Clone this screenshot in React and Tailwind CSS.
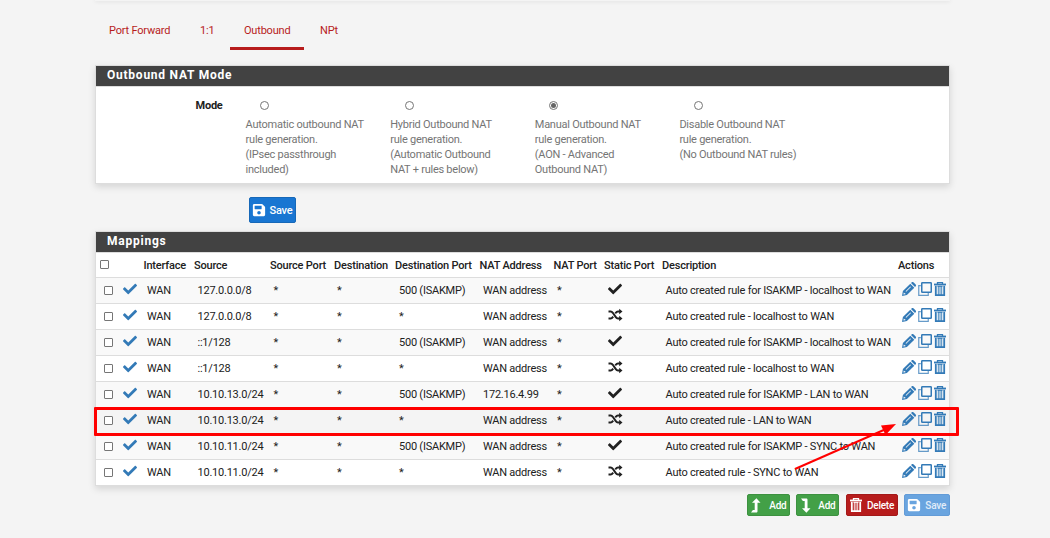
import React from "react";
import { FaCheck, FaSave } from "react-icons/fa";

const modes = [
  ["Automatic outbound NAT", "rule generation.", "(IPsec passthrough", "included)"],
  ["Hybrid Outbound NAT", "rule generation.", "(Automatic Outbound", "NAT + rules below)"],
  ["Manual Outbound NAT", "rule generation.", "(AON - Advanced", "Outbound NAT)"],
  ["Disable Outbound NAT", "rule generation.", "(No Outbound NAT rules)"],
];

const rules = [
  ["127.0.0.0/8", true, "WAN address", "Auto created rule for ISAKMP - localhost to WAN"],
  ["127.0.0.0/8", false, "WAN address", "Auto created rule - localhost to WAN"],
  ["::1/128", true, "WAN address", "Auto created rule for ISAKMP - localhost to WAN"],
  ["::1/128", false, "WAN address", "Auto created rule - localhost to WAN"],
  ["10.10.13.0/24", true, "172.16.4.99", "Auto created rule for ISAKMP - LAN to WAN"],
  ["10.10.13.0/24", false, "WAN address", "Auto created rule - LAN to WAN"],
  ["10.10.11.0/24", true, "WAN address", "Auto created rule for ISAKMP - SYNC to WAN"],
  ["10.10.11.0/24", false, "WAN address", "Auto created rule - SYNC to WAN"],
];

const columns = "grid grid-cols-[24px_24px_50px_76px_64px_61px_84.5px_74px_50.5px_58px_236px_51px]";

function Shuffle() {
  return (
    <svg width="15" height="14" viewBox="0 0 15 14" className="-ml-[0.5px] block" fill="none" stroke="currentColor" strokeWidth="2">
      <path d="M0.5 3.5h2.2c1 0 1.5.5 2.1 1.3l3 4.3c.6.9 1.2 1.4 2.2 1.4h2M.5 10.5h2.2c1 0 1.5-.5 2.1-1.3l.4-.5M7.2 5.3l.6-.5c.6-.9 1.2-1.3 2.2-1.3h2" />
      <path d="M11.2.8l3.3 2.7-3.3 2.7zM11.2 7.8l3.3 2.7-3.3 2.7z" fill="currentColor" stroke="none" />
    </svg>
  );
}

function Pencil() {
  return (
    <svg width="14" height="14" viewBox="0 0 14 14" fill="currentColor">
      <path fillRule="evenodd" d="M0 14l.9-4.9 7.4-7.4 4 4-7.4 7.4zM1.8 10.6l-.4 2 2-.4-.1-.9-.7-.1zM3.6 9.2l.6.6 4.8-4.8-.6-.6z" />
      <path d="M9 1l.8-.7c.5-.4 1.1-.4 1.6 0L13.7 2.6c.4.5.4 1.1 0 1.6L13 5z" />
    </svg>
  );
}

function Clone() {
  return (
    <svg width="14" height="14" viewBox="0 0 14 14" fill="none" stroke="currentColor">
      <rect x="3.75" y=".75" width="9.5" height="9.5" rx=".6" strokeWidth="1.5" />
      <path d="M2.8 3.6H.75v9.7h9.5v-2.3" strokeWidth="1.2" opacity=".75" />
    </svg>
  );
}

function Trash() {
  return (
    <svg width="12" height="14" viewBox="0 0 12 14" fill="none" stroke="currentColor">
      <path d="M0 2.5h12" strokeWidth="1.8" />
      <path d="M3.5 2V.7h5V2" strokeWidth="1.3" />
      <path d="M1.8 3.8v9.3h8.4V3.8" strokeWidth="1.8" />
      <path d="M3.500 4.300h5" strokeWidth="1" />
      <path d="M4.300 4v9M6 4v9M7.700 4v9" strokeWidth=".9" />
    </svg>
  );
}

function Level({ down }) {
  return (
    <svg width="10" height="15" viewBox="0 0 10 15" className="shrink-0" fill="currentColor">
      {down ? (
        <path d="M0 .5h5.2c.8 0 1.3.5 1.3 1.3v8.4h3L5.4 14.8 1 10.2h2.7V3.1H1.9z" />
      ) : (
        <path d="M0 14.5h5.2c.8 0 1.3-.5 1.3-1.3V4.8h3L5.4.2 1 4.8h2.7v7.1H1.9z" />
      )}
    </svg>
  );
}

function Box({ className = "" }) {
  return (
    <span className={`flex items-center ${className}`}>
      <span className="block h-[9px] w-[9px] rounded-[1px] border border-[#767676] bg-white" />
    </span>
  );
}

function Heading({ children }) {
  return (
    <div className="h-[21px] border-b border-[#dddddd] bg-[#424242] pl-[11px] text-[12px] leading-[18px] font-bold tracking-[0.76px] text-white">
      {children}
    </div>
  );
}

function Button({ children, className = "" }) {
  return (
    <button className={`flex items-center rounded-[2px] border font-medium text-white ${className}`}>{children}</button>
  );
}

export default function App() {
  return (
    <div className="relative h-[538px] w-[1050px] overflow-hidden bg-[#f4f4f4] font-['Roboto',sans-serif] text-[11px] tracking-[-0.23px] text-[#212121]">
      <div className="ml-[95px] w-[855px]">
        <div className="h-px shadow-[0_0_4px_rgba(0,0,0,0.22)]" />
        <nav className="flex h-[49px] tracking-[-0.2px] text-[#b71c1c]">
          <a className="w-[90px] pt-[22px] pl-[14px]">Port Forward</a>
          <a className="w-[45px] pt-[22px] pl-[15px]">1:1</a>
          <a className="w-[74px] border-b-[3px] border-[#b71c1c] pt-[22px] pl-[14px]">Outbound</a>
          <a className="pt-[22px] pl-[16px]">NPt</a>
        </nav>

        <section className="mt-[15px] h-[119px] border border-[#dddddd] bg-white shadow-[0_3px_7px_rgba(0,0,0,0.13)]">
          <Heading>Outbound NAT Mode</Heading>
          <div className="flex pt-[10px]">
            <div className="w-[149.6px] pr-[23px] text-right leading-[18px] font-bold">Mode</div>
            <div className="grid grid-cols-[144.6px_144.6px_144.6px_150px] text-[#757575]">
              {modes.map((lines, i) => (
                <label key={lines[0]} className="block leading-[15px] tracking-[-0.25px] whitespace-nowrap">
                  <span className="mt-[4px] mb-[7px] ml-[14.4px] flex h-[9px] w-[9px] items-center justify-center rounded-full border border-[#767676] bg-white">
                    {i === 2 && <span className="block h-[5px] w-[5px] rounded-full bg-[#666666]" />}
                  </span>
                  {lines.map((line) => <span key={line} className="block">{line}</span>)}
                </label>
              ))}
            </div>
          </div>
        </section>

        <Button className="mt-[13px] ml-[154px] h-[26px] w-[47px] gap-[3.5px] border-[#1768b8] bg-[#1976d2] pl-[2px] text-[11px]">
          <FaSave size={14} /><span className="pt-[2px]">Save</span>
        </Button>

        <section className="mt-[8px] border border-[#dddddd] bg-white shadow-[0_3px_7px_rgba(0,0,0,0.13)]">
          <Heading>Mappings</Heading>
          <div className={`${columns} h-[24px] items-center pt-[2px] font-medium tracking-[-0.19px] whitespace-nowrap`}>
            <Box className="mb-[3px] pl-[4px]" />
            <span />
            <span className="-ml-[0.5px]">Interface</span><span>Source</span><span>Source Port</span><span>Destination</span>
            <span>Destination Port</span><span>NAT Address</span><span>NAT Port</span><span>Static Port</span>
            <span>Description</span><span>Actions</span>
          </div>
          {rules.map(([source, fixed, address, description], i) => (
            <div
              key={i}
              className={`${columns} h-[26px] items-center border-t border-[#dddddd] pt-[2px] whitespace-nowrap ${i === 5 ? "bg-[#f4f4f4]" : i % 2 === 0 ? "bg-[#f9f9f9]" : "bg-white"}`}
            >
              <Box className="mb-[2px] pl-[8px]" />
              <FaCheck size={14} className="mb-[5px] ml-[3px] text-[#337ab7]" />
              <span className="pl-[3px]">WAN</span>
              <span className="pl-[3.5px]">{source}</span>
              <span className="pl-[3.5px]">*</span>
              <span className="pl-[3px]">*</span>
              <span className="pl-[4px]">{fixed ? "500 (ISAKMP)" : "*"}</span>
              <span className="pl-[3.5px]">{address}</span>
              <span className="pl-[3.5px]">*</span>
              <span className="mb-[5px] pl-[4px]">{fixed ? <FaCheck size={14} /> : <Shuffle />}</span>
              <span className="pl-[3.5px]">{description}</span>
              <span className="mb-[5px] flex gap-[2px] pl-[4px] text-[#337ab7]">
                <Pencil /><Clone /><Trash />
              </span>
            </div>
          ))}
        </section>

        <div className="mt-[8px] flex justify-end text-[10px] tracking-[-0.25px]">
          <Button className="mr-[6px] h-[22px] w-[43px] justify-between border-[#3d9140] bg-[#43a047] pr-[2.5px] pl-[3px]"><Level />Add</Button>
          <Button className="mr-[7px] h-[22px] w-[43px] justify-between border-[#3d9140] bg-[#43a047] pr-[2.5px] pl-[4px]"><Level down />Add</Button>
          <Button className="mr-[6px] h-[22px] w-[52px] justify-between border-[#a31919] bg-[#b71c1c] pr-[3px] pl-[3px]"><Trash />Delete</Button>
          <Button className="h-[22px] w-[46px] justify-between border-[#629bd7] bg-[#69a4df] pr-[3px] pl-[2px]"><FaSave size={14} /><span className="opacity-80">Save</span></Button>
        </div>
      </div>

      <div className="absolute top-[407px] left-[94px] h-[29px] w-[865px] rounded-[1px] border-[3px] border-[#ff0000]" />
      <svg className="absolute top-[418px] left-[790px]" width="112" height="56" viewBox="0 0 112 56">
        <path d="M5 51L96 11" stroke="#ff0000" strokeWidth="2" />
        <path d="M106 6L91 7.5l4.5 9.5z" fill="#ff0000" />
      </svg>
    </div>
  );
}
